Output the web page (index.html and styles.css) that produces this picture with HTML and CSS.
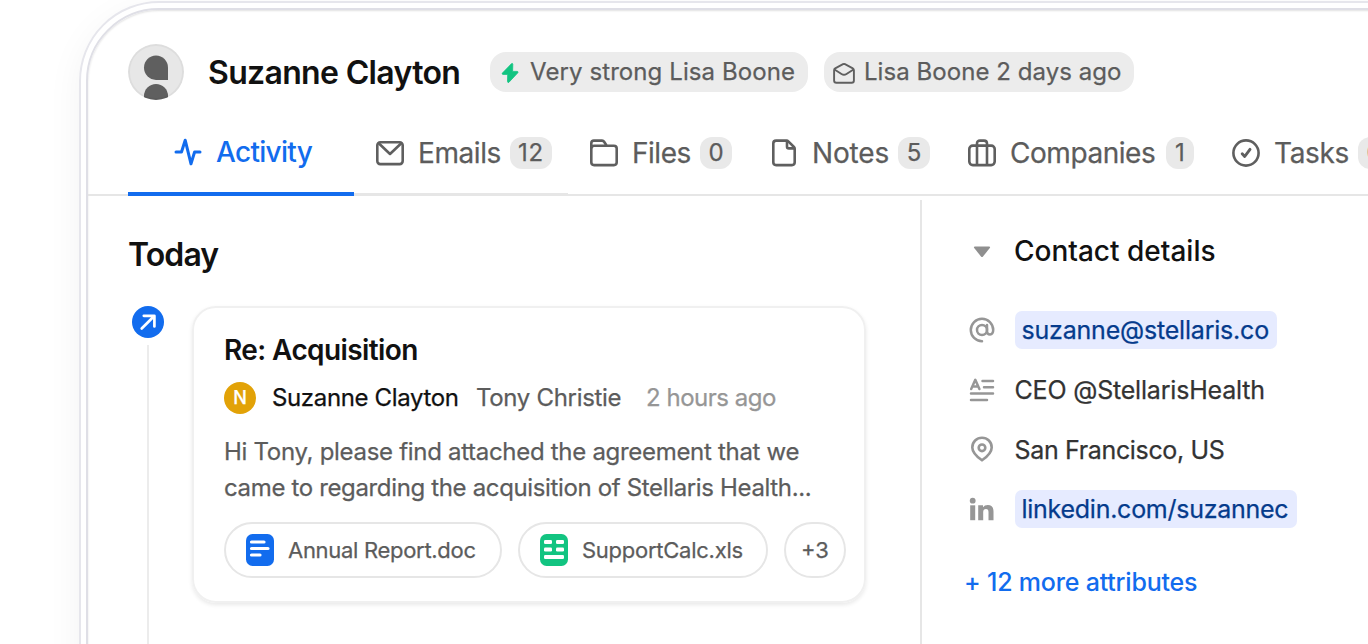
FILE: index.html
```html
<!DOCTYPE html>
<html lang="en">
<head>
<meta charset="utf-8">
<title>Suzanne Clayton</title>
<link rel="stylesheet" href="styles.css">
</head>
<body>
<div class="frame">
<div class="window">
  <header class="person">
    <svg class="avatar" width="56" height="56" viewBox="0 0 56 56">
      <defs><clipPath id="round"><circle cx="28" cy="28" r="28"/></clipPath></defs>
      <g clip-path="url(#round)">
        <rect width="56" height="56" fill="#e7e7e7"/>
        <path d="M28 11.5a12 12.2 0 0 0 0 24.4h12V23.7A12 12.2 0 0 0 28 11.5z" fill="#5f5f5f"/>
        <path d="M16 60V52a12 12 0 0 1 24 0v8z" fill="#5f5f5f"/>
        <circle cx="28" cy="28" r="27" fill="none" stroke="#000" stroke-opacity=".04" stroke-width="2"/>
      </g>
    </svg>
    <h1 class="person-name">Suzanne Clayton</h1>
    <div class="pill pill-strength">
      <svg width="18" height="22" viewBox="0 0 18 22"><path d="M10.600 1.600 1.400 11.100q-.8 1.100.6 1.300h4.700l-.2 7.200q.3 1.600 1.500.6L16.800 10.800q.8-1.200-.7-1.400h-4.500l.2-7.200q-.1-1.200-1.200-.6z" fill="#12c481" stroke="#12c481" stroke-width=".8" stroke-linejoin="round"/></svg>
      <span>Very strong Lisa Boone</span>
    </div>
    <div class="pill pill-mail">
      <svg width="22" height="22" viewBox="0 0 22 22" fill="none" stroke="#5f5f5f" stroke-width="1.900" stroke-linejoin="round"><path d="M1.100 8.200q0-1.300 1.100-1.900L10 2.200q1-.5 2 0l7.800 4.100q1.100.6 1.100 1.900v10.300q0 2.300-2.300 2.300H3.400q-2.300 0-2.300-2.300z"/><path d="M1.500 7.500 8.500 12q2.500 1.600 5 0l7-4.500"/></svg>
      <span>Lisa Boone 2 days ago</span>
    </div>
  </header>

  <nav class="tabs">
    <a class="tab tab-active">
      <svg width="28" height="28" viewBox="0 0 28 28" fill="none" stroke="#126cee" stroke-width="3" stroke-linecap="round" stroke-linejoin="round"><path d="M2 14h5.500L11.200 2.200 17 25.800 20.600 14H26"/></svg>
      <span class="t-activity">Activity</span>
    </a>
    <a class="tab tab-emails">
      <svg width="28" height="28" viewBox="0 0 28 28" fill="none" stroke="#5f5f5f" stroke-width="2.600" stroke-linejoin="round" stroke-linecap="round"><rect x="1.300" y="3.300" width="25.400" height="21.800" rx="3"/><path d="M3.500 5 14 15 24.500 5"/></svg>
      <span class="label t-emails">Emails</span><span class="count count-12">12</span>
    </a>
    <a class="tab">
      <svg width="28" height="28" viewBox="0 0 28 28" fill="none" stroke="#5f5f5f" stroke-width="2.600" stroke-linejoin="round"><path d="M1.300 23.300V4.200q0-2.600 2.600-2.600h8.200q1.300 0 2 1.100l2.600 4.100h7.200q2.800 0 2.800 2.800v13.700q0 2.800-2.800 2.800H4.100q-2.800 0-2.800-2.800z"/><path d="M1.300 9.600q0-2.800 2.800-2.800h12.600"/></svg>
      <span class="label t-files">Files</span><span class="count">0</span>
    </a>
    <a class="tab">
      <svg width="28" height="28" viewBox="0 0 28 28" fill="none" stroke="#5f5f5f" stroke-width="2.600" stroke-linejoin="round"><path d="M3.300 23.300V4.400q0-2.800 2.800-2.800h10.500q1 0 1.700.7l5.700 5.700q.7.700.7 1.700v13.600q0 2.800-2.800 2.800H6.100q-2.800 0-2.800-2.800z"/><path d="M17 1.900v5.600q0 1.900 1.900 1.900h5.500"/></svg>
      <span class="label t-notes">Notes</span><span class="count">5</span>
    </a>
    <a class="tab">
      <svg width="28" height="28" viewBox="0 0 28 28" fill="none" stroke="#5f5f5f" stroke-width="2.600" stroke-linejoin="round"><rect x="1.300" y="6.600" width="25.400" height="19.500" rx="3.500"/><path d="M9 26V4.600q0-3 3-3h4q3 0 3 3V26"/></svg>
      <span class="label t-companies">Companies</span><span class="count count-1">1</span>
    </a>
    <a class="tab">
      <svg width="28" height="28" viewBox="0 0 28 28" fill="none" stroke="#5f5f5f" stroke-width="2.600" stroke-linejoin="round" stroke-linecap="round"><circle cx="14" cy="14" r="12.600"/><path d="M10.200 14.800 12.700 17.500 18 10.300" stroke-width="2.900"/></svg>
      <span class="label t-tasks">Tasks</span><span class="count">0</span>
    </a>
  </nav>

  <main class="body">
    <section class="feed">
      <h2 class="feed-title">Today</h2>
      <div class="event">
        <div class="rail">
          <svg width="32" height="32" viewBox="0 0 32 32" fill="none"><circle cx="16" cy="16" r="16" fill="#126cee"/><path d="M11.800 9.800h10.600V20.400M22 10.200 9.700 22.500" stroke="#fff" stroke-width="2.700" stroke-linecap="round" stroke-linejoin="round"/></svg>
          <div class="rail-line"></div>
        </div>
        <article class="card">
          <h3 class="subject">Re: Acquisition</h3>
          <div class="meta">
            <span class="badge">N</span>
            <span class="from">Suzanne Clayton</span>
            <span class="to">Tony Christie</span>
            <span class="when">2 hours ago</span>
          </div>
          <p class="excerpt"><span class="line-a">Hi Tony, please find attached the agreement that we</span><br><span class="line-b">came to regarding the acquisition of Stellaris Health...</span></p>
          <div class="files">
            <div class="file file-doc">
              <svg width="28" height="32" viewBox="0 0 28 32"><rect width="28" height="32" rx="6.500" fill="#126cee"/><path d="M5.500 8h12.500M5.500 14.500h16.500M5.500 21h8.500" stroke="#fff" stroke-width="3.200" stroke-linecap="round"/></svg>
              <span>Annual Report.doc</span>
            </div>
            <div class="file file-xls">
              <svg width="28" height="32" viewBox="0 0 28 32"><rect width="28" height="32" rx="6.500" fill="#12c481"/><g fill="#fff"><rect x="4" y="6" width="8" height="4" rx="1.300"/><rect x="16" y="6" width="8" height="4" rx="1.300"/><rect x="4" y="13.500" width="8" height="4" rx="1.300"/><rect x="16" y="13.500" width="8" height="4" rx="1.300"/><rect x="4" y="21" width="20" height="4" rx="1.300"/></g></svg>
              <span>SupportCalc.xls</span>
            </div>
            <div class="file file-more">+3</div>
          </div>
        </article>
      </div>
    </section>

    <aside class="details">
      <h2 class="details-title">
        <svg width="26" height="26" viewBox="0 0 26 26"><path d="M6 8.500h14q1.700.3.800 1.600L14 18.500q-1 1-2 0L5.200 10.100Q4.300 8.800 6 8.500z" fill="#8f8f8f"/></svg>
        <span>Contact details</span>
      </h2>
      <div class="rows">
        <div class="row">
          <svg width="26" height="26" viewBox="0 0 26 26" fill="none" stroke="#969696" stroke-width="2.500" stroke-linecap="round"><circle cx="13" cy="13" r="5"/><path d="M18 8v6.200q0 3.200 3 3.200 3.200-.2 3.200-4.400A11.200 11.200 0 1 0 13 24.200"/></svg>
          <a class="link t-email">suzanne@stellaris.co</a>
        </div>
        <div class="row">
          <svg width="26" height="26" viewBox="0 0 26 26" fill="none" stroke="#969696" stroke-width="2.500" stroke-linecap="round" stroke-linejoin="round"><path d="M2.200 12 6.300 2.800 10.400 12M4 9.400h4.800M13.500 4H24M15 10.300h9M2 16.600h22M2 22.900h16"/></svg>
          <span class="t-role">CEO @StellarisHealth</span>
        </div>
        <div class="row">
          <svg width="26" height="26" viewBox="0 0 26 26" fill="none" stroke="#969696" stroke-width="2.600" stroke-linejoin="round"><path d="M13 24.300Q3.300 17.400 3.300 11.400a9.700 9.700 0 0 1 19.400 0Q22.700 17.400 13 24.300z"/><circle cx="13" cy="11.800" r="3.300"/></svg>
          <span class="t-city">San Francisco, US</span>
        </div>
        <div class="row">
          <svg width="26" height="26" viewBox="0 0 26 26" fill="#969696"><circle cx="3.700" cy="4.700" r="2.900"/><rect x="1.200" y="9.300" width="5" height="14.900"/><path d="M9.200 9.300h4.800v2q1.500-2.400 4.800-2.400 5.700 0 5.700 6.700v8.600h-5v-7.900q0-3.200-2.500-3.200-2.800 0-2.800 3.200v7.900h-5z"/></svg>
          <a class="link t-linkedin">linkedin.com/suzannec</a>
        </div>
      </div>
      <a class="more">+ 12 more attributes</a>
    </aside>
  </main>
</div>
</div>
</body>
</html>
```
FILE: styles.css
```css
* { box-sizing: border-box; }
html, body { margin: 0; width: 1368px; height: 644px; overflow: hidden; background: #fff; }
body { font-family: Inter, "Liberation Sans", sans-serif; color: #5c5c5c; padding: 1px 0 0 79px; -webkit-text-stroke: .25px; }
h1, h2, h3, p { margin: 0; }
svg { display: block; flex: none; }
span, a { white-space: nowrap; }

.frame {
  width: 1420px; height: 760px;
  border: 2px solid #e6e6ec; border-radius: 80px;
  padding: 5px;
  box-shadow: 0 10px 36px rgba(0, 0, 0, .05);
}
.window {
  height: 100%;
  display: flex; flex-direction: column;
  border: 2px solid #dfdfe6; border-radius: 73px;
  box-shadow: inset 0 1px 2px rgba(0, 0, 0, .12);
}

.person { display: flex; align-items: center; height: 56px; margin: 34px 0 0 40px; flex: none; }
.person-name { width: 282px; margin-left: 24px; padding-top: 2px; font-size: 32px; line-height: 40px; font-weight: 600; letter-spacing: -.67px; color: #111; white-space: nowrap; -webkit-text-stroke: 0; }
.pill { display: flex; align-items: center; height: 40px; border-radius: 16px; background: #ececec; font-size: 24px; line-height: 38px; padding-bottom: 1px; }
.pill svg { position: relative; top: 1px; }
.pill-strength { width: 318px; padding-left: 11px; gap: 11px; letter-spacing: .09px; }
.pill-mail { width: 310px; margin-left: 16px; padding-left: 9px; gap: 9px; letter-spacing: .05px; }

.tabs { display: flex; height: 96px; flex: none; padding-left: 40px; border-bottom: 2px solid #e6e6e6; }
.tab { display: flex; align-items: center; flex: none; height: 94px; padding-top: 12px; margin-right: 38px; font-size: 28px; line-height: 34px; }
.tab svg { margin-right: 14px; }
.tab-active { width: 226px; height: 96px; margin-right: 0; padding: 12px 0 0 46px; border-bottom: 4px solid #126cee; color: #126cee; font-weight: 500; -webkit-text-stroke: 0; }
.tab-active svg { margin-right: 14px; }
.tab-emails { width: 214px; margin-right: 0; padding: 13px 0 0 22px; height: 95px; border-bottom: 2px solid #e6e6e6; }
.tab-emails + .tab { margin-left: 22px; }
.t-activity { letter-spacing: -.7px; }
.t-emails { width: 92px; letter-spacing: -.429px; }
.t-files { width: 68px; letter-spacing: -.479px; }
.t-notes { width: 86px; letter-spacing: -.149px; }
.t-companies { width: 156px; letter-spacing: -.445px; }
.t-tasks { width: 84px; letter-spacing: -.348px; }
.count { width: 32px; height: 32px; border-radius: 12px; background: #e9e9e9; font-size: 24px; line-height: 31px; text-align: center; }
.count-12 { width: 42px; letter-spacing: .8px; }
.count-1 { width: 28px; }

.body { display: flex; flex: 1; min-height: 0; }
.feed { width: 832px; flex: none; padding: 38px 0 0 40px; display: flex; flex-direction: column; }
.feed-title { font-size: 32px; line-height: 42px; font-weight: 600; letter-spacing: -.9px; color: #111; -webkit-text-stroke: 0; }
.event { display: flex; flex: 1; margin-top: 30px; }
.rail { width: 40px; display: flex; flex-direction: column; align-items: center; }
.rail-line { width: 2px; flex: 1; margin-top: 7px; background: #ececec; }
.card {
  width: 674px; height: 297px; margin-left: 24px; padding: 24px 0 0 30px;
  border: 2px solid #f0f0f0; border-radius: 24px;
  box-shadow: 0 2px 4px rgba(0, 0, 0, .09);
}
.subject { font-size: 28px; line-height: 36px; font-weight: 600; letter-spacing: -.6px; color: #111; -webkit-text-stroke: 0; }
.meta { display: flex; align-items: center; height: 32px; margin-top: 14px; font-size: 24px; line-height: 32px; }
.badge { width: 32px; height: 32px; border-radius: 50%; background: #e2a207; color: #fff; font-size: 18px; font-weight: 500; text-align: center; }
.from { width: 204px; margin-left: 16px; color: #111; letter-spacing: -.36px; }
.to { width: 170px; letter-spacing: -.321px; }
.when { color: #969696; letter-spacing: -.481px; }
.excerpt { margin-top: 20px; font-size: 24px; line-height: 36px; }
.line-a { letter-spacing: -.3px; }
.line-b { letter-spacing: -.35px; }
.files { display: flex; gap: 16px; margin-top: 16px; font-size: 22px; line-height: 30px; }
.file { display: flex; align-items: center; height: 56px; border: 2px solid #e6e6e6; border-radius: 28px; padding-left: 20px; gap: 14px; }
.file-doc { width: 278px; letter-spacing: -.3px; }
.file-xls { width: 250px; letter-spacing: -.255px; }
.file-more { width: 62px; padding: 0; justify-content: center; }

.details { flex: 1; margin-top: 4px; border-left: 2px solid #e6e6e6; padding: 33px 0 0 47px; }
.details-title { display: flex; align-items: center; font-size: 28px; line-height: 36px; font-weight: 500; color: #111; -webkit-text-stroke: 0; }
.details-title svg { margin-right: 19px; }
.details-title span { padding-top: 1px; line-height: 35px; }
.rows { margin-top: 31px; font-size: 25px; line-height: 38px; color: #333; }
.row { display: flex; align-items: center; height: 59.700px; }
.row svg { margin-right: 19.500px; }
.link { height: 38px; border-radius: 7px; background: #e6ebff; color: #053b8c; padding-left: 7px; }
.t-email { width: 262px; letter-spacing: -.2px; }
.t-role { letter-spacing: -.19px; }
.t-city { letter-spacing: -.34px; padding-top: 1px; }
.t-linkedin { width: 282px; letter-spacing: -.26px; }
.more { display: block; margin: 24px 0 0 -5px; font-size: 25px; line-height: 38px; letter-spacing: -.2px; font-weight: 500; color: #126cee; -webkit-text-stroke: 0; }
```
